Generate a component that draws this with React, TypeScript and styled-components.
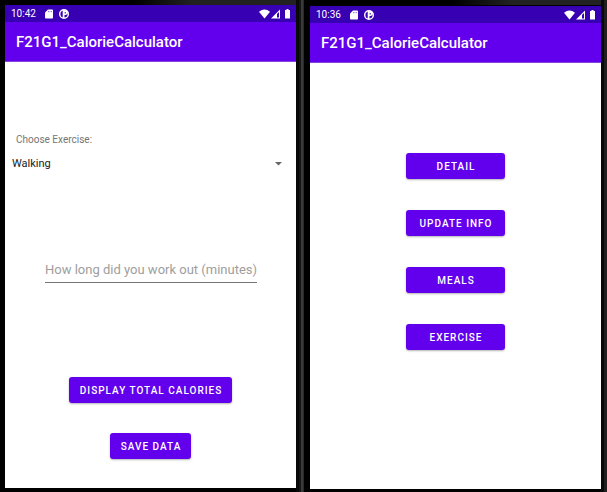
import React from 'react';
import styled, { createGlobalStyle } from 'styled-components';

const GlobalStyle = createGlobalStyle`
  * { box-sizing: border-box; }
  body {
    margin: 0;
    background: #000;
    font-family: Roboto, 'Noto Sans', sans-serif;
  }
`;

const Desk = styled.div`
  display: flex;
  min-height: 100vh;
  background: #000;
`;

const Phone = styled.section<{ $top: number; $bottom: number; $left: number; $sheen: number }>`
  flex: 1 1 auto;
  width: ${(p) => 291 + p.$left}px;
  display: flex;
  padding: ${(p) => `${p.$top}px 0 ${p.$bottom}px ${p.$left}px`};
  background: linear-gradient(90deg, #000 ${(p) => p.$sheen}%, #222 ${(p) => p.$sheen + 20}%) top / 100% 5px no-repeat #000;
`;

const Divider = styled.div`
  flex: none;
  width: 8px;
  background: linear-gradient(90deg, #080808 3px, #141414 3px 5px, #3a3a3a 5px 7px, #2a2a2a 7px);
`;

const Edge = styled.div`
  flex: none;
  width: 6px;
  background: linear-gradient(90deg, #080808 3px, #1f1f1f 3px);
`;

const Screen = styled.div`
  flex: 1;
  min-width: 0;
  display: flex;
  flex-direction: column;
  background: #fff;
`;

const StatusBar = styled.div`
  display: flex;
  align-items: center;
  height: 17px;
  padding: 0 6px;
  background: #3700b3;
  color: #fff;
  font-size: 10px;
  line-height: 17px;
`;

const Clock = styled.time`
  width: 33px;
`;

const Notices = styled.div`
  display: flex;
  gap: 5px;
  flex: 1;
`;

const Signals = styled.div`
  display: flex;
  align-items: center;
  gap: 4px;
`;

const AppBar = styled.header`
  display: flex;
  align-items: center;
  height: 40px;
  padding: 1px 11px 0;
  background: #6200ee;
  border-bottom: 1px solid #8642df;
`;

const Title = styled.h1`
  margin: 0;
  color: #fff;
  font-size: 15px;
  font-weight: 500;
  line-height: 20px;
`;

const Form = styled.form`
  display: flex;
  flex-direction: column;
  padding: 71px 7px 20px;
`;

const FieldLabel = styled.label`
  padding-left: 4px;
  color: #757575;
  font-size: 10px;
  line-height: 14px;
`;

const SelectRow = styled.div`
  display: grid;
  align-items: center;
  margin-top: 7px;
  height: 20px;

  & > * { grid-area: 1 / 1; }
  & > svg {
    justify-self: end;
    margin-right: 7px;
    pointer-events: none;
  }
`;

const Select = styled.select`
  appearance: none;
  width: 100%;
  height: 20px;
  margin: 0;
  padding: 0;
  border: 0;
  background: transparent;
  color: #212121;
  font-family: inherit;
  font-size: 11px;
  line-height: 20px;
`;

const MinutesInput = styled.input`
  width: 212px;
  height: 26px;
  margin: 83px auto 0 33px;
  padding: 0;
  border: 0;
  border-bottom: 1px solid #757575;
  border-radius: 0;
  background: transparent;
  color: #212121;
  font-family: inherit;
  font-size: 13px;

  &::placeholder { color: #9e9e9e; opacity: 1; }
`;

const Actions = styled.div`
  display: flex;
  flex-direction: column;
  align-items: center;
  gap: 30px;
  margin-top: 94px;
`;

const Menu = styled.nav`
  display: flex;
  flex-direction: column;
  align-items: center;
  gap: 31px;
  padding: 90px 0;
`;

const Button = styled.button<{ $wide?: boolean }>`
  height: 26px;
  min-width: ${(p) => (p.$wide ? '99px' : '64px')};
  padding: 1px 10px 0 11px;
  border: 0;
  border-radius: 3px;
  background: #6200ee;
  box-shadow: 0 1px 2px rgba(0, 0, 0, 0.3);
  color: #fff;
  font-family: inherit;
  font-size: 10px;
  font-weight: 500;
  line-height: 25px;
  letter-spacing: 1px;
  text-transform: uppercase;
`;

function Status({ time }: { time: string }) {
  return (
    <StatusBar>
      <Clock>{time}</Clock>
      <Notices>
        <svg width="10" height="10" viewBox="0 0 10 10" aria-hidden="true">
          <path d="M4 .5h4.200q.8 0 .8.8v7.400q0 .8-.8.8H1.800q-.8 0-.8-.8V3.500z" fill="#fff" />
          <path d="M4.500 2v1.200M6 2v1.200M7.500 2v1.200" stroke="#3700b3" strokeWidth=".5" />
        </svg>
        <svg width="10" height="10" viewBox="0 0 10 10" aria-hidden="true">
          <circle cx="5" cy="5" r="4.300" fill="none" stroke="#fff" strokeWidth="1.400" />
          <path d="M3.700 1h1.800v8H3.700z" fill="#fff" />
          <path d="M5 1.200h1.500a2.300 2.300 0 0 1 0 4.800H5z" fill="#fff" />
          <path d="M5.700 3h1v1.500h-1z" fill="#3700b3" />
        </svg>
      </Notices>
      <Signals>
        <svg width="22" height="10" viewBox="0 0 22 10" aria-hidden="true">
          <path d="M0 2.800Q5.500-1.800 11 2.800L5.500 9.500z" fill="#fff" />
          <path d="M12 9.500 21 .5v9z" fill="#fff" />
          <path d="M18 5 20 3v5.500h-2z" fill="#3700b3" />
        </svg>
        <svg width="5" height="10" viewBox="0 0 5 10" aria-hidden="true">
          <path d="M1.500 0h2v1H5v8.500H0V1h1.500z" fill="#fff" />
        </svg>
      </Signals>
    </StatusBar>
  );
}

function TopBars({ time }: { time: string }) {
  return (
    <>
      <Status time={time} />
      <AppBar>
        <Title>F21G1_CalorieCalculator</Title>
      </AppBar>
    </>
  );
}

const menuItems = ['Detail', 'Update Info', 'Meals', 'Exercise'];

export default function App() {
  return (
    <>
      <GlobalStyle />
      <Desk>
        <Phone $top={5} $bottom={4} $left={5} $sheen={45}>
          <Screen>
            <TopBars time="10:42" />
            <Form onSubmit={(e) => e.preventDefault()}>
              <FieldLabel htmlFor="exercise">Choose Exercise:</FieldLabel>
              <SelectRow>
                <Select id="exercise" defaultValue="Walking">
                  <option>Walking</option>
                </Select>
                <svg width="7" height="4" viewBox="0 0 7 4" aria-hidden="true">
                  <path d="M0 0h7L3.500 3.500z" fill="#666" />
                </svg>
              </SelectRow>
              <MinutesInput
                aria-label="How long did you work out (minutes)"
                placeholder="How long did you work out (minutes)"
                inputMode="numeric"
              />
              <Actions>
                <Button type="button">Display Total Calories</Button>
                <Button type="submit">Save Data</Button>
              </Actions>
            </Form>
          </Screen>
        </Phone>
        <Divider />
        <Phone $top={6} $bottom={3} $left={6} $sheen={50}>
          <Screen>
            <TopBars time="10:36" />
            <Menu>
              {menuItems.map((item) => (
                <Button key={item} type="button" $wide>
                  {item}
                </Button>
              ))}
            </Menu>
          </Screen>
        </Phone>
        <Edge />
      </Desk>
    </>
  );
}
